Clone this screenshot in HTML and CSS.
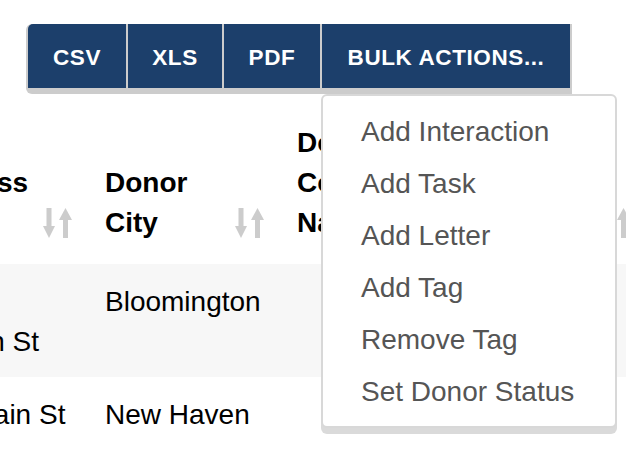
FILE: index.html
```html
<!DOCTYPE html>
<html lang="en">
<head>
<meta charset="utf-8">
<title>Donors</title>
<link rel="stylesheet" href="styles.css">
</head>
<body>
<div class="toolbar-row">
  <div class="export-group">
    <div class="btn-group">
      <button class="btn btn-first">CSV</button>
      <button class="btn">XLS</button>
      <button class="btn">PDF</button>
      <button class="btn btn-last">BULK ACTIONS...</button>
    </div>
    <ul class="dropdown-menu">
      <li class="dropdown-item">Add Interaction</li>
      <li class="dropdown-item">Add Task</li>
      <li class="dropdown-item">Add Letter</li>
      <li class="dropdown-item">Add Tag</li>
      <li class="dropdown-item">Remove Tag</li>
      <li class="dropdown-item">Set Donor Status</li>
    </ul>
  </div>
</div>
<table class="donor-table">
  <colgroup>
    <col class="col-address">
    <col class="col-city">
    <col class="col-contact">
  </colgroup>
  <thead>
    <tr>
      <th><div class="th-inner"><span class="th-text">Donor Address 1</span><svg class="sort-icon" viewBox="0 0 29 30" width="29" height="30"><rect x="3.5" y="0" width="5" height="19"/><polygon points="0,18 12,18 6,30"/><polygon points="16,12 29,12 22.5,0"/><rect x="20" y="11" width="5" height="19"/></svg></div></th>
      <th><div class="th-inner"><span class="th-text">Donor City</span><svg class="sort-icon" viewBox="0 0 29 30" width="29" height="30"><rect x="3.5" y="0" width="5" height="19"/><polygon points="0,18 12,18 6,30"/><polygon points="16,12 29,12 22.5,0"/><rect x="20" y="11" width="5" height="19"/></svg></div></th>
      <th><div class="th-inner"><span class="th-text th-text-narrow">Donor Contact Name</span><svg class="sort-icon" viewBox="0 0 29 30" width="29" height="30"><rect x="3.5" y="0" width="5" height="19"/><polygon points="0,18 12,18 6,30"/><polygon points="16,12 29,12 22.5,0"/><rect x="20" y="11" width="5" height="19"/></svg></div></th>
    </tr>
  </thead>
  <tbody>
    <tr class="row-striped">
      <td>12500 Lincoln St</td>
      <td>Bloomington</td>
      <td></td>
    </tr>
    <tr>
      <td>100 Main St</td>
      <td>New Haven</td>
      <td></td>
    </tr>
  </tbody>
</table>
</body>
</html>
```

FILE: styles.css
```css
html, body {
  margin: 0;
  padding: 0;
  background: #ffffff;
  overflow: hidden;
}

body {
  font-family: "Liberation Sans", Arial, Helvetica, sans-serif;
  color: #000000;
  width: 626px;
  height: 450px;
}

.toolbar-row {
  display: flex;
  align-items: flex-start;
  padding: 24px 0 0 26px;
}

.export-group {
  position: relative;
}

.btn-group {
  display: flex;
  gap: 2px;
  background: #cccccc;
  padding: 0 2px 6px 2px;
  border-radius: 6px 0 0 6px;
}

.btn {
  display: block;
  margin: 0;
  border: 0;
  background: #1c3f6b;
  color: #ffffff;
  font-family: "Liberation Sans", Arial, Helvetica, sans-serif;
  font-weight: bold;
  font-size: 22.5px;
  letter-spacing: 0.6px;
  height: 64px;
  line-height: 62px;
  padding: 3px 0 0 0;
  text-align: center;
  cursor: pointer;
}

.btn-group .btn:nth-child(1) { width: 98px; border-top-left-radius: 5px; }
.btn-group .btn:nth-child(2) { width: 94px; }
.btn-group .btn:nth-child(3) { width: 96px; }
.btn-group .btn:nth-child(4) { width: 248px; }

.dropdown-menu {
  position: absolute;
  left: 295px;
  top: 70px;
  width: 296px;
  box-sizing: border-box;
  margin: 0;
  padding: 10px 0 8px 0;
  list-style: none;
  background: #ffffff;
  border: 2px solid #d8d8d8;
  border-radius: 6px;
  box-shadow: 0 6px 0 #dadada;
  z-index: 10;
}

.dropdown-item {
  font-size: 28px;
  line-height: 40px;
  padding: 6px 20px 6px 38px;
  color: #555555;
  white-space: nowrap;
}

.donor-table {
  table-layout: fixed;
  border-collapse: collapse;
  width: 747px;
  margin-left: -98px;
  font-size: 28px;
  line-height: 40px;
}

.col-address { width: 189px; }
.col-city { width: 192px; }
.col-contact { width: 366px; }

.donor-table th {
  text-align: left;
  vertical-align: bottom;
  font-weight: bold;
  padding: 29px 19px 21px 14px;
}

.th-inner {
  display: flex;
  align-items: flex-end;
  gap: 8px;
}

.th-text {
  flex: 1 1 auto;
  min-width: 0;
}

.th-text-narrow {
  flex: 0 0 120px;
  margin-right: auto;
}

.sort-icon {
  flex: 0 0 29px;
  fill: #cccccc;
  margin-bottom: 5px;
}

.donor-table td {
  vertical-align: top;
  padding: 18px 14px 15px 14px;
}

.row-striped td {
  background: #f7f7f7;
}
```
